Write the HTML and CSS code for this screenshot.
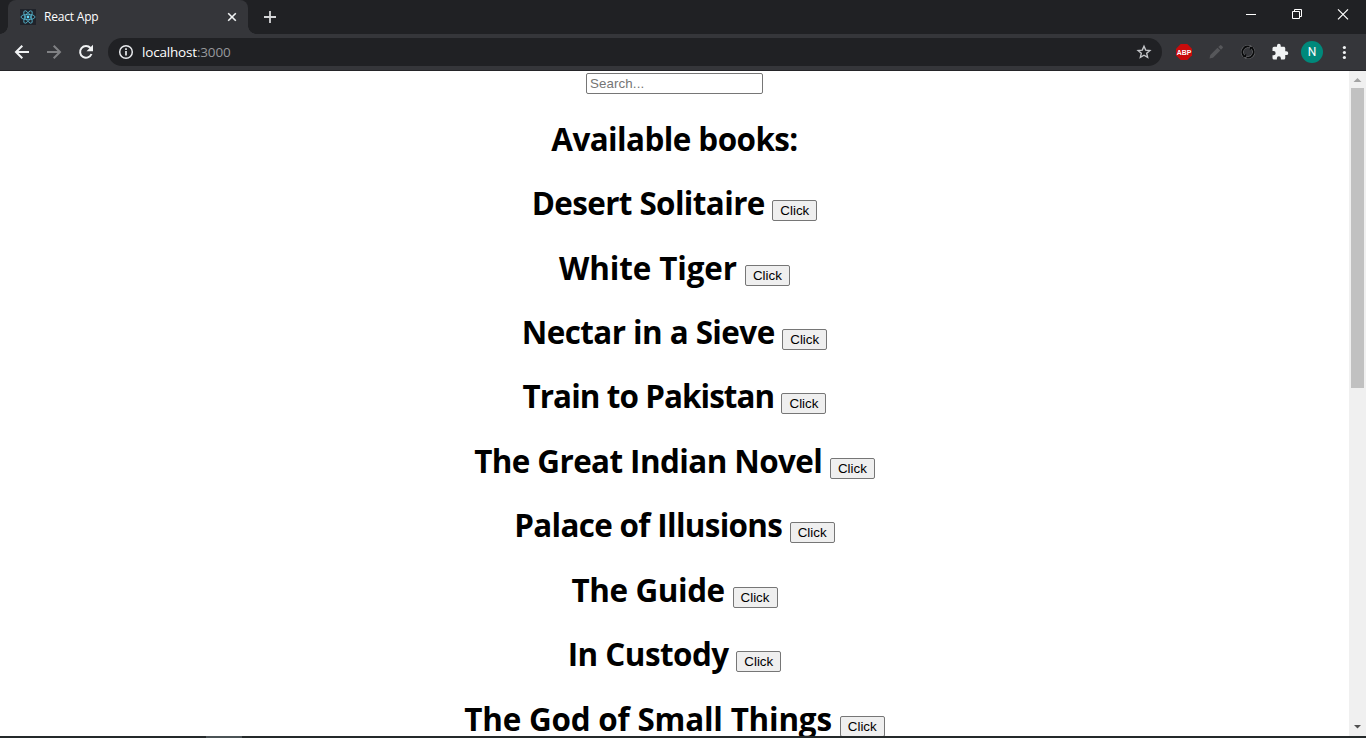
FILE: index.html
```html
<!DOCTYPE html>
<html lang="en">
<head>
<meta charset="utf-8">
<title>React App</title>
<link rel="stylesheet" href="styles.css">
</head>
<body>
<div class="window">
  <header class="tabstrip">
    <div class="tab">
      <svg class="favicon" width="16" height="16" viewBox="0 0 16 16"><rect width="16" height="16" fill="#20232a"/><g fill="none" stroke="#58bdd6" stroke-width=".8"><ellipse cx="8" cy="8" rx="7" ry="2.7"/><ellipse cx="8" cy="8" rx="7" ry="2.7" transform="rotate(60 8 8)"/><ellipse cx="8" cy="8" rx="7" ry="2.7" transform="rotate(120 8 8)"/></g><circle cx="8" cy="8" r="1.4" fill="#61dafb"/></svg>
      <span class="tab-title">React App</span>
      <svg width="16" height="16" viewBox="0 0 16 16"><path d="M4.200 4.200l7.600 7.600M11.800 4.200l-7.600 7.600" stroke="#f1f3f4" stroke-width="1.600"/></svg>
    </div>
    <svg class="new-tab" width="14" height="14" viewBox="0 0 14 14"><path d="M7 1v12M1 7h12" stroke="#d5d6d8" stroke-width="1.800"/></svg>
    <div class="controls">
      <svg width="46" height="30" viewBox="0 0 46 30"><path d="M18 14.500h10" stroke="#fff"/></svg>
      <svg width="46" height="30" viewBox="0 0 46 30"><path d="M18.500 11.500h7v7h-7zM20.500 11.500v-2h7v7h-2" fill="none" stroke="#fff"/></svg>
      <svg width="46" height="30" viewBox="0 0 46 30"><path d="M18 9.300l10 10M28 9.300l-10 10" stroke="#fff" stroke-width="1.200"/></svg>
    </div>
  </header>
  <nav class="toolbar">
    <svg class="back" width="16" height="16" viewBox="0 0 16 16"><path d="M15 8H2.500M8.300 1.700L2 8l6.300 6.300" fill="none" stroke="#f1f3f4" stroke-width="2"/></svg>
    <svg class="forward" width="16" height="16" viewBox="0 0 16 16"><path d="M1 8h12.500M7.700 1.700L14 8l-6.300 6.300" fill="none" stroke="#808184" stroke-width="2"/></svg>
    <svg class="reload" width="16" height="16" viewBox="0 0 16 16"><path d="M13.500 10A5.900 5.900 0 1 1 12.500 4" fill="none" stroke="#f1f3f4" stroke-width="2"/><path d="M15 .8v6.500H8.500z" fill="#f1f3f4"/></svg>
    <div class="address">
      <svg width="16" height="16" viewBox="0 0 16 16"><circle cx="8" cy="8" r="6.300" fill="none" stroke="#e8eaed" stroke-width="1.500"/><path d="M8 7v4.500M8 4.300v1.600" stroke="#e8eaed" stroke-width="1.700"/></svg>
      <span class="url">localhost<span class="port">:3000</span></span>
      <svg width="16" height="16" viewBox="0 0 16 16"><path d="M8 2.200l1.700 3.900 4.200.4-3.200 2.800.95 4.100L8 11.200l-3.650 2.200.95-4.100-3.200-2.800 4.200-.4z" fill="none" stroke="#c5c7ca" stroke-width="1.400"/></svg>
    </div>
    <div class="extensions">
      <svg width="16" height="16" viewBox="0 0 16 16"><path d="M4.700 0h6.600L16 4.700v6.600L11.300 16H4.700L0 11.300V4.700z" fill="#c80b0b"/><text class="abp" x="8" y="11" text-anchor="middle" textLength="14.500" lengthAdjust="spacingAndGlyphs">ABP</text></svg>
      <svg width="16" height="16" viewBox="0 0 16 16"><path d="M1.500 14.500l.8-3.500 7.200-7.200 2.800 2.800L5 13.700zM10.300 3l1.700-1.600q.7-.6 1.400 0l1.300 1.300q.6.700 0 1.400L13 5.800z" fill="#56575a"/></svg>
      <svg width="16" height="16" viewBox="0 0 16 16"><g fill="none"><circle cx="8" cy="8" r="5.600" stroke="#707174" stroke-width="3"/><path d="M9.500 2.600A5.600 5.600 0 0 0 4.300 12.200M6.500 13.400A5.600 5.600 0 0 0 11.700 3.800" stroke="#08090a" stroke-width="1.800"/></g><path d="M2.500 13.300H6.200V9.800zM13.500 2.700H9.800v3.500z" fill="#08090a"/></svg>
      <svg width="18" height="18" viewBox="0 0 24 24"><path fill="#f1f3f4" d="M20.500 11H19V7c0-1.100-.9-2-2-2h-4V3.500a2.500 2.500 0 0 0-5 0V5H4a2 2 0 0 0-2 2v3.800h1.500a2.700 2.700 0 0 1 0 5.400H2V20a2 2 0 0 0 2 2h3.800v-1.500a2.700 2.700 0 0 1 5.400 0V22H17a2 2 0 0 0 2-2v-4h1.500a2.500 2.500 0 0 0 0-5z"/></svg>
      <span class="avatar">N</span>
      <svg width="16" height="16" viewBox="0 0 16 16" fill="#f1f3f4"><circle cx="8.400" cy="3.500" r="1.600"/><circle cx="8.400" cy="8.500" r="1.600"/><circle cx="8.400" cy="13.500" r="1.600"/></svg>
    </div>
  </nav>
  <div class="viewport">
    <main class="page">
      <input class="search" type="text" placeholder="Search...">
      <h1 class="heading">Available books:</h1>
      <h1 class="book desert">Desert Solitaire <button>Click</button></h1>
      <h1 class="book tiger">White Tiger <button>Click</button></h1>
      <h1 class="book nectar">Nectar in a Sieve <button>Click</button></h1>
      <h1 class="book train">Train to Pakistan <button>Click</button></h1>
      <h1 class="book novel">The Great Indian Novel <button>Click</button></h1>
      <h1 class="book palace">Palace of Illusions <button>Click</button></h1>
      <h1 class="book guide">The Guide <button>Click</button></h1>
      <h1 class="book custody">In Custody <button>Click</button></h1>
      <h1 class="book small-things">The God of Small Things <button>Click</button></h1>
    </main>
    <aside class="scrollbar">
      <svg width="17" height="17" viewBox="0 0 17 17"><path d="M4.500 11h8l-4-4z" fill="#a3a3a3"/></svg>
      <div class="thumb"></div>
      <svg class="down" width="17" height="17" viewBox="0 0 17 17"><path d="M5 6h7L8.500 9.500z" fill="#505050"/></svg>
    </aside>
  </div>
  <footer class="taskbar"><span class="active-app"></span></footer>
</div>
</body>
</html>
```
FILE: styles.css
```css
* { box-sizing: border-box; }
body { margin: 0; overflow: hidden; background: #fff; }
svg { display: block; flex: none; }
.window { display: flex; flex-direction: column; width: 1366px; height: 738px; }

.tabstrip { display: flex; height: 34px; padding-left: 8px; background: #202124; flex: none; }
.tab { position: relative; display: flex; align-items: center; width: 240px; height: 34px; padding: 0 8px 0 12px; border-radius: 8px 8px 0 0; background: #35363a; }
.tab::before, .tab::after { content: ""; position: absolute; bottom: 0; width: 8px; height: 8px; }
.tab::before { left: -8px; background: radial-gradient(circle at 0 0, #202124 7.5px, #35363a 8px); }
.tab::after { right: -8px; background: radial-gradient(circle at 100% 0, #202124 7.5px, #35363a 8px); }
.tab-title { flex: 1; padding-left: 8px; color: #fff; font: 12px/16px "Open Sans", "Noto Sans", sans-serif; letter-spacing: -0.2px; }
.new-tab { margin: 10px 0 0 15px; }
.controls { display: flex; margin-left: auto; }

.toolbar { display: flex; align-items: center; height: 37px; padding-left: 14px; background: #35363a; border-bottom: 1px solid #242428; flex: none; }
.forward, .reload { margin-left: 16px; }
.address { display: flex; align-items: center; width: 1054px; height: 28px; margin-left: 14px; padding: 0 10px; border-radius: 14px; background: #202124; }
.url { flex: 1; padding-left: 8px; color: #fff; font: 13.5px/18px "Open Sans", "Noto Sans", sans-serif; letter-spacing: -0.18px; }
.port { color: #96989c; }
.extensions { display: flex; align-items: center; padding-left: 14px; }
.extensions > :nth-child(2) { margin-left: 16px; }
.extensions > :nth-child(3) { margin-left: 16px; }
.extensions > :nth-child(4) { margin-left: 15px; }
.abp { fill: #fff; font: bold 8px "Liberation Sans", sans-serif; }
.avatar { width: 22px; height: 22px; margin: 0 13px 0 12px; border-radius: 50%; background: #00897b; color: #fff; font: 12px/22px Roboto, sans-serif; text-align: center; }

.viewport { display: flex; flex: 1; min-height: 0; overflow: hidden; }
.page { flex: 1; padding-top: 2px; text-align: center; }
.search { display: block; width: 177px; height: 21px; margin: 0 auto; padding: 1px 3px; border: 1px solid #767676; border-radius: 2px; font: 13.333px "Liberation Sans", sans-serif; letter-spacing: 0.1px; }
.search::placeholder { color: #757575; }
.heading, .book { height: 43px; margin: 0 0 21.44px; color: #000; font: bold 31.4px/43px "Open Sans", "Noto Sans", sans-serif; white-space: nowrap; }
.heading { margin-top: 22.7px; letter-spacing: -0.57px; }
.desert { letter-spacing: -0.61px; }
.tiger { letter-spacing: -0.13px; }
.nectar { letter-spacing: -0.57px; }
.train { letter-spacing: -0.93px; }
.novel { letter-spacing: -0.58px; }
.palace { letter-spacing: -0.68px; }
.guide { letter-spacing: -0.4px; }
.custody { letter-spacing: -0.53px; }
.small-things { letter-spacing: -0.2px; }
.book button { width: 45px; height: 21px; padding: 0; border: 1px solid #767676; border-radius: 2px; background: #efefef; color: #000; font: 13.333px "Liberation Sans", sans-serif; letter-spacing: 0; }
.scrollbar { display: flex; flex-direction: column; align-items: center; width: 17px; background: #f0f0f0; }
.thumb { width: 13px; height: 300px; background: #c1c1c1; }
.down { margin-top: auto; }
.taskbar { height: 2px; padding-left: 206px; background: #24292a; flex: none; }
.active-app { display: block; width: 36px; height: 2px; background: #4b5356; }
```
